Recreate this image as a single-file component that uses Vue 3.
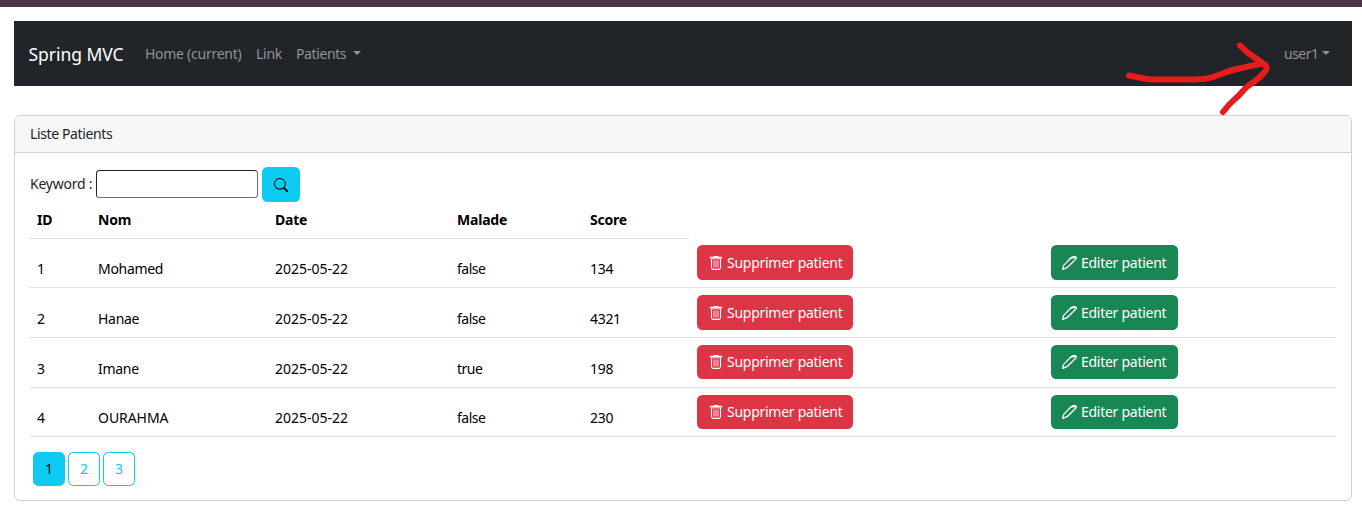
<script setup>
const columns = ['ID', 'Nom', 'Date', 'Malade', 'Score']
const patients = [
  { id: 1, nom: 'Mohamed', date: '2025-05-22', malade: false, score: 134 },
  { id: 2, nom: 'Hanae', date: '2025-05-22', malade: false, score: 4321 },
  { id: 3, nom: 'Imane', date: '2025-05-22', malade: true, score: 198 },
  { id: 4, nom: 'OURAHMA', date: '2025-05-22', malade: false, score: 230 },
]
const pages = [1, 2, 3]
</script>

<template>
  <div class="page">
    <div class="strip"></div>
    <nav class="navbar">
      <a class="brand">Spring MVC</a>
      <a class="link home">Home (current)</a>
      <a class="link lnk">Link</a>
      <a class="link patients">Patients</a>
      <i class="caret"></i>
      <a class="link user">user1</a>
      <i class="caret user-caret"></i>
    </nav>

    <section class="card">
      <header class="card-header"><span>Liste Patients</span></header>
      <div class="card-body">
        <form class="search">
          <label>Keyword :</label>
          <input type="text" />
          <button type="button" class="search-btn">
            <svg width="14.4" height="14.4" viewBox="0 0 16 16" fill="currentColor">
              <path d="M11.742 10.344a6.5 6.5 0 1 0-1.397 1.398h-.001q.044.06.098.115l3.85 3.85a1 1 0 0 0 1.415-1.414l-3.85-3.85a1 1 0 0 0-.115-.1zM12 6.5a5.5 5.5 0 1 1-11 0 5.5 5.5 0 0 1 11 0" />
            </svg>
          </button>
        </form>

        <div class="table">
          <div class="row head">
            <span v-for="c in columns" :key="c" :class="'h-' + c.toLowerCase()">{{ c }}</span>
          </div>
          <div v-for="p in patients" :key="p.id" class="row" :class="'r' + p.id">
            <span>{{ p.id }}</span>
            <span class="nom">{{ p.nom }}</span>
            <span class="date">{{ p.date }}</span>
            <span class="malade">{{ p.malade }}</span>
            <span class="score">{{ p.score }}</span>
            <button type="button" class="btn danger">
              <svg width="14" height="14" viewBox="0 0 14 14" fill="none" stroke="#fff">
                <path d="M.8 1.500H13.200" stroke-width="1.400" />
                <path d="M4.500.5H9.500" stroke-width="1" />
                <path d="M1.500 2.800H12.500" stroke-width="1.200" stroke-opacity=".65" />
                <path d="M2.500 3V11.500Q2.600 13.400 4 13.400H10Q11.400 13.400 11.500 11.500V3" stroke-width="1.100" />
                <path d="M5 4.500V11.500M7 4.500V11.500M9 4.500V11.500" stroke="#ffd0ef" stroke-width="1" />
              </svg>
              <span>Supprimer patient</span>
            </button>
            <button type="button" class="btn success">
              <svg width="15" height="14" viewBox="0 0 15 14" fill="none" stroke="#fff" stroke-linejoin="round" stroke-linecap="round">
                <path d="M.7 13.400 1.500 9.600 9 1.700Q10.800.5 13.200.7Q14.900 1.300 13.700 3.300L5 11.700Z" stroke-width="1.300" />
                <path d="M8.400 2.400Q11 1.200 13.200 1.800" stroke-width="1.200" />
              </svg>
              <span>Editer patient</span>
            </button>
          </div>
        </div>

        <div class="pagination">
          <a v-for="n in pages" :key="n" :class="{ active: n === 1 }">{{ n }}</a>
        </div>
      </div>
    </section>

    <svg class="arrow" width="160" height="84" viewBox="1120 36 160 84" fill="none" stroke="#e71d1d" stroke-width="6" stroke-linecap="round" stroke-linejoin="round">
      <path d="M1129 75.500C1137 77 1146 79.500 1153 79.500H1190C1215 79.500 1215 75 1233 70Q1248 66 1263 63.500Q1268 65 1266 70C1262 76 1254 82 1248 86C1243 90 1240 95 1235 99Q1229 104 1223 112" />
      <path d="M1240 45.500C1250 56 1251 54 1263 63.500" />
    </svg>
  </div>
</template>

<style>
body { margin: 0; background: #fff; }
</style>

<style scoped>
.page {
  position: relative;
  box-sizing: border-box;
  width: 1362px;
  height: 508px;
  overflow: hidden;
  font-family: "Noto Sans", "Open Sans", sans-serif;
  font-size: 14px;
  line-height: 22px;
  color: #212529;
  white-space: nowrap;
}
.strip { height: 7px; background: #4b3545; }
.navbar {
  box-sizing: border-box;
  display: flex;
  align-items: center;
  height: 65px;
  margin: 14px 10px 0 14px;
  padding: 1px 22px 0 14.5px;
  background: #212529;
}
.brand { width: 116.5px; font-size: 17.5px; color: #fff; letter-spacing: -0.05px; }
.link { color: #909294; letter-spacing: -0.27px; }
.home { width: 111px; }
.lnk { width: 40px; }
.patients { width: 57px; letter-spacing: -0.4px; }
.caret {
  border-top: 4px solid #909294;
  border-left: 4px solid transparent;
  border-right: 4px solid transparent;
  margin-top: -3px;
}
.user { width: 38px; margin-left: auto; letter-spacing: -0.5px; }
.card {
  box-sizing: border-box;
  height: 386px;
  margin: 29px 10px 0 14px;
  border: 1px solid #d0d0d1;
  border-radius: 6px;
  overflow: hidden;
}
.card-header {
  box-sizing: border-box;
  height: 37px;
  padding: 7px 15px;
  background: #f7f7f7;
  border-bottom: 1px solid #d0d0d1;
  letter-spacing: -0.38px;
}
.card-body { padding: 14px 15px; }
.search { display: flex; align-items: center; height: 35px; }
.search label { width: 66px; letter-spacing: -0.25px; margin-top: -2px; }
.search input {
  box-sizing: border-box;
  width: 162px;
  height: 28px;
  margin: 0 4px 1px 0;
  padding: 0;
  border: 1px solid #212529;
  border-right-color: #6c6e70;
  border-bottom-color: #6c6e70;
  border-radius: 3.5px;
  background: #fff;
}
.search-btn {
  display: flex;
  align-items: center;
  justify-content: center;
  width: 38px;
  height: 35px;
  padding: 1px 0 0;
  border: 0;
  border-radius: 5.4px;
  background: #0dcaf0;
  color: #000;
}
.row {
  box-sizing: border-box;
  display: grid;
  grid-template-columns: 61px 177px 182px 133px 107px 354px 1fr;
  height: 50px;
  padding: 7px 0 0 7px;
  border-bottom: 1px solid #dee2e6;
  color: #000;
}
.row > span { padding-top: 13px; letter-spacing: -0.3px; }
.row > .date { letter-spacing: 0; }
.row > .malade { letter-spacing: -0.5px; }
.row.head { width: 659px; height: 37px; padding-top: 0; font-weight: 700; }
.row.head > span { padding-top: 7px; letter-spacing: -0.2px; }
.row.r1, .row.r4 { height: 49px; }
.row.r1 { padding-top: 6px; }
.row.r4 > span { padding-top: 12px; }
.row.r4 > .nom { letter-spacing: -0.05px; }
.btn {
  box-sizing: border-box;
  display: flex;
  align-items: center;
  height: 35px;
  padding: 0 0 0 11px;
  border: 0;
  border-radius: 5.4px;
  color: #fff;
  font: inherit;
  letter-spacing: -0.27px;
}
.btn svg { flex: none; margin-right: 4px; }
.r3 .btn, .r4 .btn { height: 34px; }
.danger { width: 156px; background: #dc3545; }
.danger svg { margin-left: 1px; }
.success { width: 127px; background: #198754; }
.pagination { display: flex; gap: 3px; margin: 15px 0 0 3px; }
.pagination a {
  box-sizing: border-box;
  width: 32px;
  height: 34px;
  border: 1px solid #0dcaf0;
  border-radius: 5.4px;
  line-height: 32px;
  text-align: center;
  color: #0dcaf0;
}
.pagination a.active { background: #0dcaf0; color: #000; }
.arrow { position: absolute; left: 1120px; top: 36px; }
</style>
